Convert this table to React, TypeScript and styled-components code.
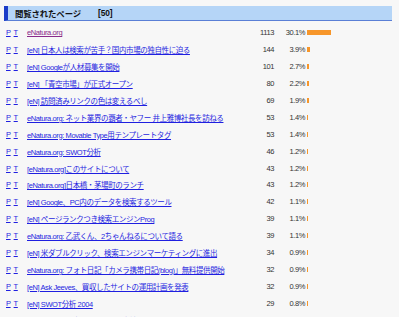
import React from "react";
import styled, { createGlobalStyle } from "styled-components";

const Global = createGlobalStyle`
  html, body { margin: 0; padding: 0; background: #f7f7f7; }
  body { font-family: "Liberation Sans", "Noto Sans CJK JP", sans-serif; }
`;

const Page = styled.div`
  padding: 6px 7px 0 4px;
  width: 399px;
  height: 317px;
  box-sizing: border-box;
  overflow: hidden;
`;

const Header = styled.div`
  display: flex;
  align-items: center;
  height: 14px;
  background: #b5d5f7;
  border-left: 4px solid #1b3cc8;
  border-bottom: 1px solid #5a7fd6;
  padding-left: 7px;
  font-size: 8.4px;
  font-weight: bold;
  color: #111;
  letter-spacing: -0.1px;
`;

const HeaderCount = styled.span`
  margin-left: 17px;
`;

const List = styled.div`
  margin-top: 3.5px;
  padding-left: 2px;
`;

const Row = styled.div`
  display: grid;
  grid-template-columns: 21px 213px 34px 31px 88px;
  align-items: center;
  height: 16.9px;
  font-size: 7.5px;
  letter-spacing: -0.4px;
  white-space: nowrap;
`;

const Links = styled.div`
  display: flex;
  gap: 3px;
`;

const Link = styled.a<{ $visited?: boolean }>`
  color: ${(p) => (p.$visited ? "#8a2a8a" : "#1f1fe0")};
  text-decoration: underline;
`;

const Num = styled.span`
  text-align: right;
  color: #333;
`;

const BarCell = styled.div`
  display: flex;
  align-items: center;
  padding-left: 2px;
`;

const Bar = styled.div`
  height: 5px;
  background: #f7962a;
`;

const rows: [string, number, number, boolean?][] = [
  ["eNatura.org", 1113, 30.1, true],
  ["[eN] 日本人は検索が苦手？国内市場の独自性に迫る", 144, 3.9],
  ["[eN] Googleが人材募集を開始", 101, 2.7],
  ["[eN] 「青空市場」が正式オープン", 80, 2.2],
  ["[eN] 訪問済みリンクの色は変えるべし", 69, 1.9],
  ["eNatura.org: ネット業界の覇者・ヤフー 井上雅博社長を訪ねる", 53, 1.4],
  ["eNatura.org: Movable Type用テンプレートタグ", 53, 1.4],
  ["eNatura.org: SWOT分析", 46, 1.2],
  ["[eNatura.org]このサイトについて", 43, 1.2],
  ["[eNatura.org]日本橋・茅場町のランチ", 43, 1.2],
  ["[eN] Google、PC内のデータを検索するツール", 42, 1.1],
  ["[eN] ページランクつき検索エンジンProg", 39, 1.1],
  ["eNatura.org: 乙武くん、2ちゃんねるについて語る", 39, 1.1],
  ["[eN] 米ダブルクリック、検索エンジンマーケティングに進出", 34, 0.9],
  ["eNatura.org: フォト日記「カメラ携帯日記(blog)」無料提供開始", 32, 0.9],
  ["[eN] Ask Jeeves、買収したサイトの運用計画を発表", 32, 0.9],
  ["[eN] SWOT分析 2004", 29, 0.8],
  ["eNatura.org: 検索エンジンの検索結果を比較する", 19, 0.5],
];

export default function App() {
  return (
    <Page>
      <Global />
      <Header>
        閲覧されたページ<HeaderCount>[50]</HeaderCount>
      </Header>
      <List>
        {rows.map(([title, count, pct, visited], i) => (
          <Row key={i}>
            <Links>
              <Link href="#">P</Link>
              <Link href="#">T</Link>
            </Links>
            <span>
              <Link href="#" $visited={visited}>{title}</Link>
            </span>
            <Num>{count}</Num>
            <Num>{pct.toFixed(1)}%</Num>
            <BarCell>
              <Bar style={{ width: `${pct * 0.8}px` }} />
            </BarCell>
          </Row>
        ))}
      </List>
    </Page>
  );
}
